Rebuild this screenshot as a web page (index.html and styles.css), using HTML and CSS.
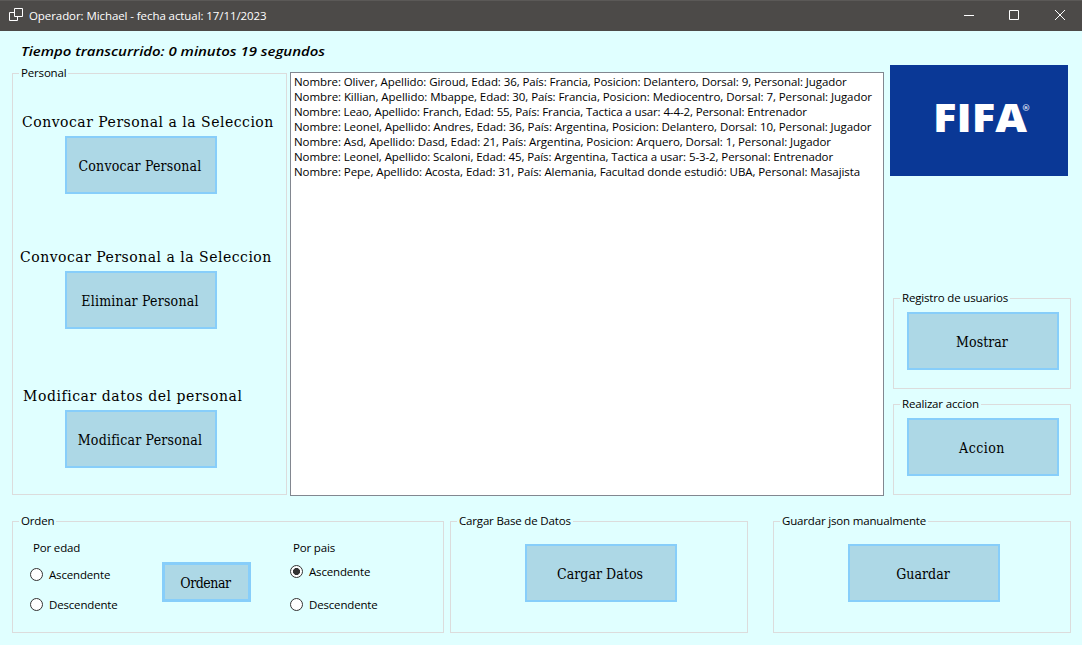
FILE: index.html
```html
<!DOCTYPE html>
<html lang="es">
<head>
<meta charset="utf-8">
<title>Operador: Michael</title>
<link rel="stylesheet" href="styles.css">
</head>
<body>
<header class="titlebar">
  <svg class="app-icon" width="14" height="13" viewBox="0 0 14 13"><path d="M5.5 .5h8v8h-8zM5.500 4.500h-5v8h8v-4"/></svg>
  <span class="title">Operador: Michael - fecha actual: 17/11/2023</span>
  <div class="controls">
    <svg class="minimize" width="10" height="10" viewBox="0 0 10 10"><path d="M0 5.5h10"/></svg>
    <svg width="10" height="10" viewBox="0 0 10 10"><path d="M.5 .5h9v9h-9z"/></svg>
    <svg width="10" height="10" viewBox="0 0 10 10"><path d="M0 0l10 10M10 0l-10 10"/></svg>
  </div>
</header>
<main class="form">
  <div class="elapsed"><span>Tiempo transcurrido: 0 minutos 19 segundos</span></div>
  <section class="upper">
    <fieldset class="group staff">
      <legend>Personal</legend>
      <p class="caption first">Convocar Personal a la Seleccion</p>
      <button class="btn">Convocar Personal</button>
      <p class="caption second">Convocar Personal a la Seleccion</p>
      <button class="btn">Eliminar Personal</button>
      <p class="caption third">Modificar datos del personal</p>
      <button class="btn">Modificar Personal</button>
    </fieldset>
    <ul class="list">
      <li>Nombre: Oliver, Apellido: Giroud, Edad: 36, País: Francia, Posicion: Delantero, Dorsal: 9, Personal: Jugador</li>
      <li>Nombre: Killian, Apellido: Mbappe, Edad: 30, País: Francia, Posicion: Mediocentro, Dorsal: 7, Personal: Jugador</li>
      <li>Nombre: Leao, Apellido: Franch, Edad: 55, País: Francia, Tactica a usar: 4-4-2, Personal: Entrenador</li>
      <li>Nombre: Leonel, Apellido: Andres, Edad: 36, País: Argentina, Posicion: Delantero, Dorsal: 10, Personal: Jugador</li>
      <li>Nombre: Asd, Apellido: Dasd, Edad: 21, País: Argentina, Posicion: Arquero, Dorsal: 1, Personal: Jugador</li>
      <li>Nombre: Leonel, Apellido: Scaloni, Edad: 45, País: Argentina, Tactica a usar: 5-3-2, Personal: Entrenador</li>
      <li>Nombre: Pepe, Apellido: Acosta, Edad: 31, País: Alemania, Facultad donde estudió: UBA, Personal: Masajista</li>
    </ul>
    <div class="side">
      <svg class="logo" width="178" height="111" viewBox="0 0 178 111">
        <rect width="178" height="111"/>
        <text class="logo-word" x="43" y="67" textLength="94" lengthAdjust="spacingAndGlyphs">FIFA</text>
        <text class="logo-mark" x="131.500" y="46">®</text>
      </svg>
      <fieldset class="group action">
        <legend>Registro de usuarios</legend>
        <button class="btn">Mostrar</button>
      </fieldset>
      <fieldset class="group action">
        <legend>Realizar accion</legend>
        <button class="btn wide">Accion</button>
      </fieldset>
    </div>
  </section>
  <section class="lower">
    <fieldset class="group order">
      <legend>Orden</legend>
      <div class="order-row">
        <div class="choice age">
          <span class="choice-title">Por edad</span>
          <label class="radio"><i class="dot"></i>Ascendente</label>
          <label class="radio"><i class="dot"></i>Descendente</label>
        </div>
        <button class="btn small">Ordenar</button>
        <div class="choice country">
          <span class="choice-title">Por pais</span>
          <label class="radio"><i class="dot on"></i>Ascendente</label>
          <label class="radio"><i class="dot"></i>Descendente</label>
        </div>
      </div>
    </fieldset>
    <fieldset class="group load">
      <legend>Cargar Base de Datos</legend>
      <button class="btn">Cargar Datos</button>
    </fieldset>
    <fieldset class="group save">
      <legend>Guardar json manualmente</legend>
      <button class="btn">Guardar</button>
    </fieldset>
  </section>
</main>
</body>
</html>
```

FILE: styles.css
```css
* { box-sizing: border-box; }

body {
  margin: 0;
  width: 1082px;
  height: 645px;
  overflow: hidden;
  background: #e0ffff;
  color: #000;
  font: 11.5px/15px "Open Sans", "Noto Sans", sans-serif;
  letter-spacing: -.17px;
}

.titlebar {
  display: flex;
  align-items: center;
  height: 31px;
  padding: 0 17px 0 9px;
  border-top: 1px solid #5b5957;
  background: #4c4a48;
  color: #fff;
}

.titlebar svg { fill: none; stroke: #fff; stroke-width: 1; }
.app-icon { margin-bottom: 3px; }
.title { margin: 0 0 1px 6px; letter-spacing: -.08px; }
.controls { display: flex; gap: 36px; margin: 0 0 2px auto; }
.controls .minimize { margin-right: -1px; }

.form { padding: 0 11px 0 12px; }

.elapsed {
  height: 34px;
  padding: 12px 0 0 9px;
  font-size: 13px;
  font-weight: 600;
  font-style: italic;
  line-height: 16px;
  letter-spacing: 0;
}

.elapsed span {
  display: inline-block;
  transform: scaleX(1.15);
  transform-origin: left;
}

.upper { display: flex; height: 431px; }

.group {
  min-width: 0;
  margin: 0;
  padding: 0;
  border: 1px solid #dcdcdc;
}

.group legend {
  height: 16px;
  margin-left: 6px;
  padding: 0 2px;
  line-height: 16px;
}

.btn {
  display: block;
  width: 152px;
  height: 58px;
  padding: 2px 2px 0 0;
  border: 2px solid #87cefa;
  border-radius: 0;
  background: #add8e6;
  color: #000;
  font: 14px/18px "DejaVu Serif Condensed", "DejaVu Serif", serif;
  font-stretch: condensed;
  letter-spacing: .05px;
}

.staff { width: 275px; height: 430px; }
.staff .btn { margin-left: 52px; letter-spacing: .2px; }
.btn.wide { letter-spacing: .5px; }

.caption {
  height: 18px;
  margin: 0;
  font: 14px/18px "DejaVu Serif", serif;
  letter-spacing: .5px;
  white-space: nowrap;
}

.first { margin: 32px 0 5px 9px; }
.second { margin: 54px 0 5px 7px; }
.third { margin: 58px 0 5px 10px; letter-spacing: .56px; }

.list {
  width: 594px;
  height: 424px;
  margin: 7px 0 0 3px;
  padding: 1px 3px;
  border: 1px solid #828790;
  background: #fff;
  list-style: none;
  white-space: nowrap;
  letter-spacing: -.09px;
}

.list li:nth-child(2) { letter-spacing: -.066px; }
.list li:nth-child(3) { letter-spacing: -.116px; }
.list li:nth-child(5) { letter-spacing: -.077px; }
.list li:nth-child(6) { letter-spacing: -.097px; }
.list li:nth-child(7) { letter-spacing: -.075px; }

.side { width: 181px; margin-left: 6px; }

.logo { display: block; margin-bottom: 114px; letter-spacing: 0; }
.logo rect { fill: #0a3896; }
.logo-word { fill: #fff; font: 800 39px "Open Sans", sans-serif; }
.logo-mark { fill: #d5deee; font: 600 9px "DejaVu Sans", sans-serif; }

.action { width: 178px; height: 99px; margin: 0 0 7px 3px; }
.action .btn { margin: 6px 0 0 13px; }

.lower { display: flex; margin-top: 17px; }
.order { width: 432px; height: 120px; }
.load { width: 298px; height: 120px; margin-left: 6px; }
.save { width: 298px; height: 120px; margin-left: 25px; }
.load .btn, .save .btn { margin: 15px 0 0 74px; }

.order-row { display: flex; }
.choice { display: flex; flex-direction: column; }
.choice-title { height: 15px; margin-left: 3px; }
.age { width: 132px; margin: 11px 0 0 17px; }
.country { margin: 11px 0 0 39px; }
.order .small { width: 89px; height: 40px; margin-top: 33px; border-width: 3px; letter-spacing: -.45px; }

.radio { display: flex; align-items: center; height: 15px; }
.age .radio { margin-top: 12px; }
.age .radio + .radio { margin-top: 15px; }
.country .radio { margin-top: 9px; }
.country .radio + .radio { margin-top: 18px; }

.dot {
  width: 13px;
  height: 13px;
  margin-right: 6px;
  border: 1px solid #333;
  border-radius: 50%;
  background: #fff;
}

.dot.on { background: radial-gradient(circle, #333 3.2px, #fff 3.8px); }
```
